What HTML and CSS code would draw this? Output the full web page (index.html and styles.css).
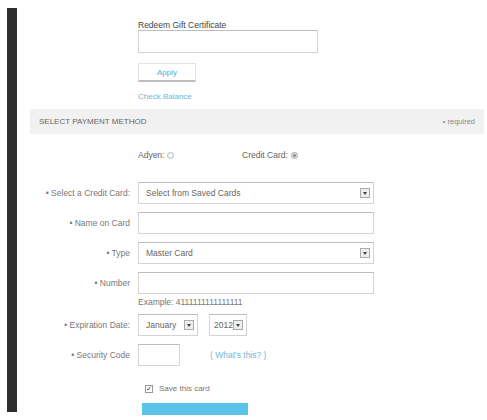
FILE: index.html
```html
<!DOCTYPE html>
<html lang="en">
<head>
  <meta charset="UTF-8" />
  <title>Checkout - Payment</title>
  <link rel="stylesheet" href="styles.css">
</head>
<body>
  <div class="page">
    <div class="sidebar"></div>

    <div class="main">
      <!-- GIFT CERTIFICATE -->
      <div class="gift">
        <label class="gift-label">Redeem Gift Certificate</label>
        <input class="field gift-input" type="text">
        <button class="apply">Apply</button>
        <a class="link check" href="#">Check Balance</a>
      </div>

      <!-- PAYMENT METHOD -->
      <div class="section-head">
        <span>Select Payment Method</span>
        <span class="req">&bull; required</span>
      </div>

      <div class="methods">
        <span class="method">Adyen: <span class="radio"></span></span>
        <span class="method">Credit Card: <span class="radio on"></span></span>
      </div>

      <div class="form">
        <div class="row">
          <div class="label">&bull; Select a Credit Card:</div>
          <div class="field select wide"><span>Select from Saved Cards</span><span class="arrow"></span></div>
        </div>
        <div class="row">
          <div class="label">&bull; Name on Card</div>
          <input class="field wide" type="text">
        </div>
        <div class="row">
          <div class="label">&bull; Type</div>
          <div class="field select wide"><span>Master Card</span><span class="arrow"></span></div>
        </div>
        <div class="row number">
          <div class="label">&bull; Number</div>
          <input class="field wide" type="text">
        </div>
        <div class="example">Example: 4111111111111111</div>
        <div class="row">
          <div class="label">&bull; Expiration Date:</div>
          <div class="dates">
            <div class="field select month"><span>January</span><span class="arrow"></span></div>
            <div class="field select year"><span>2012</span><span class="arrow"></span></div>
          </div>
        </div>
        <div class="row">
          <div class="label">&bull; Security Code</div>
          <div class="cvn">
            <input class="field code" type="text">
            <a class="link" href="#">( What's this? )</a>
          </div>
        </div>
        <div class="save">
          <span class="checkbox">&#10003;</span>
          <span>Save this card</span>
        </div>
        <div class="submit"></div>
      </div>
    </div>
  </div>
</body>
</html>
```

FILE: styles.css
```css
body {
  margin: 0;
  background: #fff;
  font-family: "Liberation Sans", Arial, sans-serif;
  font-size: 8.5px;
  color: #666;
}

.page {
  display: flex;
  align-items: flex-start;
}

.sidebar {
  width: 10px;
  height: 404px;
  margin: 8px 0 0 7px;
  background: #2e2e2e;
}

.main {
  width: 454px;
  margin-left: 13px;
}

.field {
  box-sizing: border-box;
  height: 22px;
  margin: 0;
  border: 1px solid #d4d4d4;
  border-top-color: #bdbdbd;
  background: #fff;
  font: inherit;
  color: #666;
  padding: 0 8px;
}

.link {
  color: #72b6d6;
  text-decoration: none;
}

/* gift certificate */
.gift {
  padding: 21px 0 0 108px;
  display: flex;
  flex-direction: column;
  align-items: flex-start;
}

.gift-label {
  color: #444;
  line-height: 9px;
}

.gift-input {
  width: 180px;
  height: 23px;
}

.apply {
  margin-top: 10px;
  width: 58px;
  height: 19px;
  border: 1px solid #e4e4e4;
  border-bottom: 2px solid #bdbdbd;
  background: #fff;
  color: #5aa9cf;
  font: inherit;
  font-size: 8px;
  padding: 0;
}

.check {
  margin-top: 10px;
  font-size: 8px;
}

/* section header */
.section-head {
  margin-top: 8px;
  height: 25px;
  background: #f1f1f1;
  display: flex;
  justify-content: space-between;
  align-items: center;
  padding: 0 9px;
  text-transform: uppercase;
  font-size: 8px;
  color: #666;
}

.section-head .req {
  text-transform: none;
  font-size: 7.5px;
  color: #888;
}

.methods {
  display: flex;
  padding: 15px 0 0 108px;
  height: 12px;
  align-items: center;
}

.method {
  width: 104px;
  display: flex;
  align-items: center;
  gap: 3px;
}

.radio {
  width: 5px;
  height: 5px;
  border: 1px solid #bbb;
  border-radius: 50%;
  background: #f4f4f4;
}

.radio.on {
  background: #888;
  box-shadow: inset 0 0 0 1px #eee;
}

/* card form */
.form {
  padding-top: 21px;
}

.row {
  display: flex;
  align-items: center;
  gap: 8px;
  margin-bottom: 8px;
}

.row.number {
  margin-bottom: 3px;
}

.label {
  width: 100px;
  text-align: right;
  color: #777;
}

.wide {
  width: 236px;
}

.select {
  display: flex;
  align-items: center;
  justify-content: space-between;
  padding: 0 3px 0 7px;
}

.arrow {
  box-sizing: border-box;
  width: 10px;
  height: 10px;
  border: 1px solid #aaa;
  background: #eee;
  position: relative;
}

.arrow::after {
  content: "";
  position: absolute;
  left: 2px;
  top: 3px;
  border-left: 2px solid transparent;
  border-right: 2px solid transparent;
  border-top: 3px solid #444;
}

.example {
  margin: 0 0 7px 108px;
  line-height: 10px;
  color: #777;
}

.dates {
  display: flex;
  gap: 11px;
}

.month {
  width: 60px;
}

.year {
  width: 38px;
  padding-left: 4px;
}

.cvn {
  display: flex;
  align-items: center;
  gap: 30px;
}

.code {
  width: 42px;
}

.save {
  display: flex;
  align-items: center;
  gap: 6px;
  padding: 10px 0 0 115px;
  font-size: 8px;
  color: #777;
}

.checkbox {
  box-sizing: border-box;
  width: 8px;
  height: 8px;
  border: 1px solid #999;
  font-size: 7px;
  line-height: 6px;
  text-align: center;
  color: #333;
}

.submit {
  margin: 10px 0 0 112px;
  width: 106px;
  height: 12px;
  background: #5ac3ea;
}
```
